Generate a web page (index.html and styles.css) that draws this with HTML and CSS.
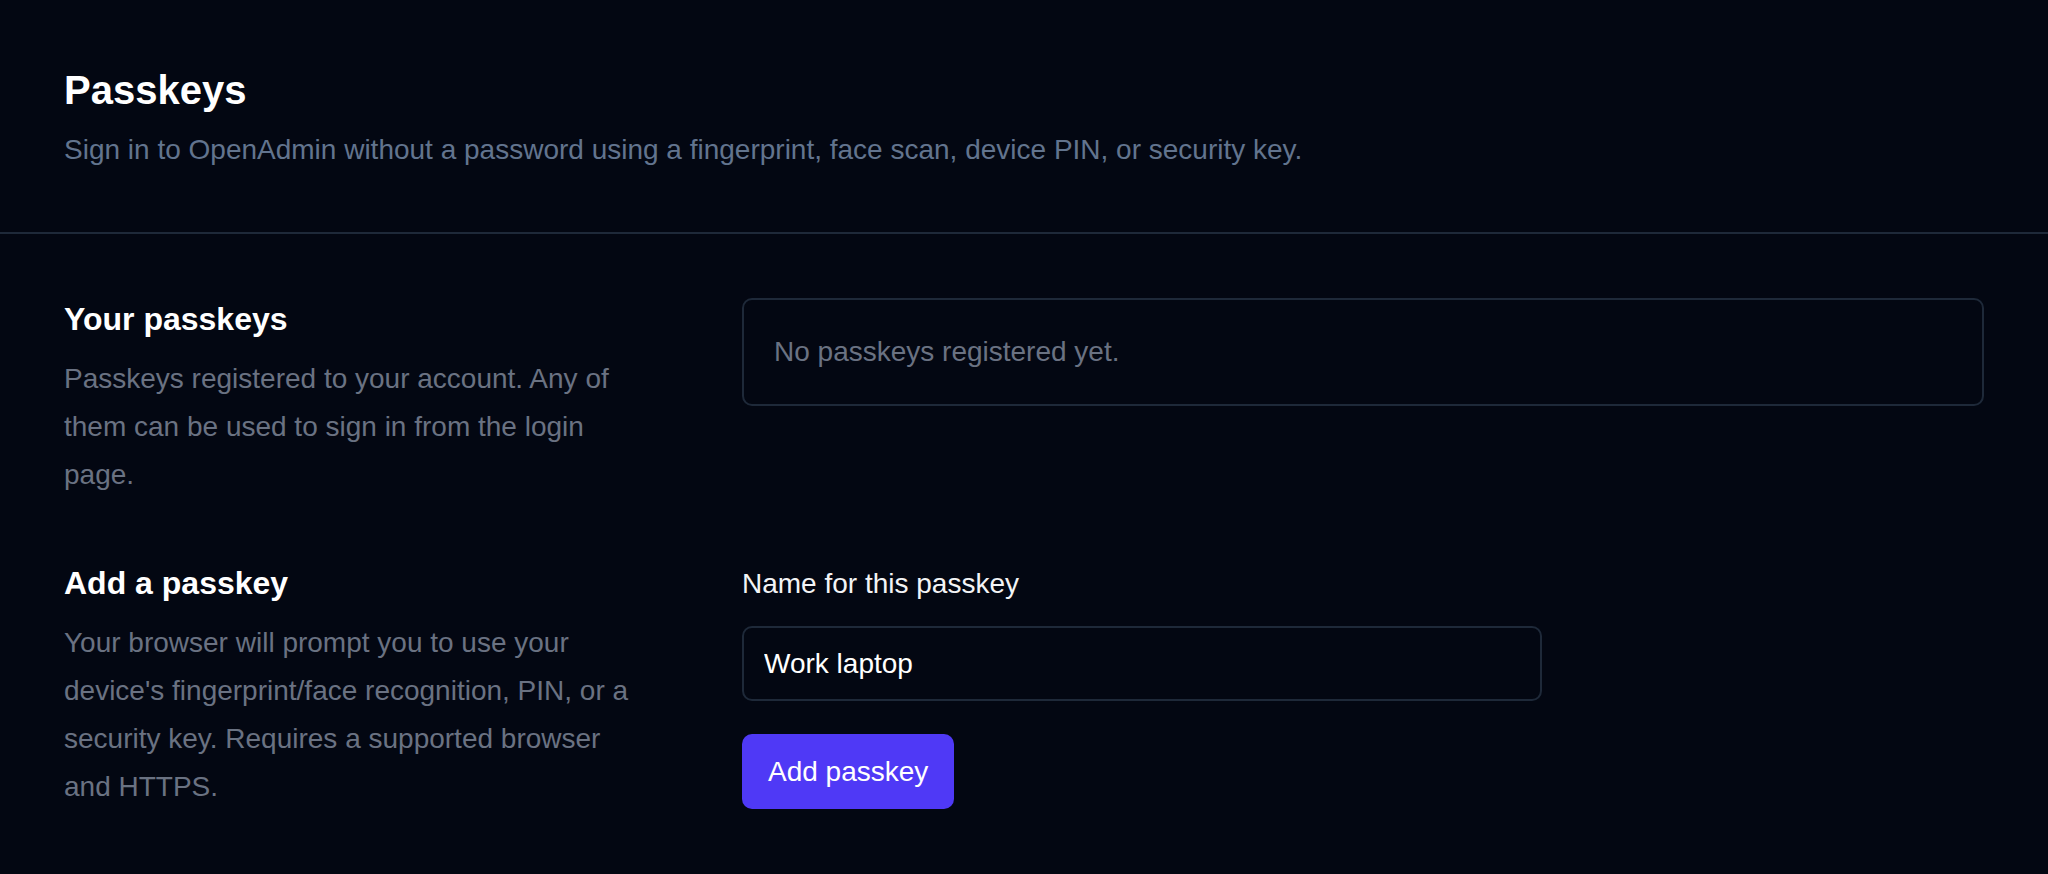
FILE: index.html
```html
<!DOCTYPE html>
<html lang="en">
<head>
<meta charset="utf-8">
<title>Passkeys</title>
<link rel="stylesheet" href="styles.css">
</head>
<body>
  <header class="page-header">
    <h1 class="page-title">Passkeys</h1>
    <p class="page-subtitle">Sign in to OpenAdmin without a password using a fingerprint, face scan, device PIN, or security key.</p>
  </header>
  <main class="settings">
    <section class="settings-row">
      <div class="row-info">
        <h2 class="row-title">Your passkeys</h2>
        <p class="row-desc">Passkeys registered to your account. Any of them can be used to sign in from the login page.</p>
      </div>
      <div class="row-body">
        <div class="empty-box">No passkeys registered yet.</div>
      </div>
    </section>
    <section class="settings-row">
      <div class="row-info">
        <h2 class="row-title">Add a passkey</h2>
        <p class="row-desc">Your browser will prompt you to use your device's fingerprint/face recognition, PIN, or a security key. Requires a supported browser and HTTPS.</p>
      </div>
      <form class="row-body add-form">
        <label class="field-label" for="pk-name">Name for this passkey</label>
        <input class="field-input" id="pk-name" type="text" value="Work laptop">
        <button class="btn-primary" type="button">Add passkey</button>
      </form>
    </section>
  </main>
</body>
</html>
```
FILE: styles.css
```css
* { box-sizing: border-box; }
html, body {
  margin: 0;
  padding: 0;
  background: #030712;
  color: #ffffff;
  font-family: "Liberation Sans", Arial, sans-serif;
}
body { min-height: 874px; }

.page-header {
  padding: 62px 64px 62px;
  border-bottom: 2px solid #1e2939;
}
.page-title {
  margin: 0;
  font-size: 40px;
  line-height: 56px;
  font-weight: 700;
  color: #ffffff;
}
.page-subtitle {
  margin: 12px 0 0;
  font-size: 28px;
  line-height: 40px;
  color: #62748e;
}

.settings {
  padding: 64px 64px 0;
  display: flex;
  flex-direction: column;
  gap: 63px;
}
.settings-row {
  display: grid;
  grid-template-columns: 1fr 2fr;
  column-gap: 57px;
  align-items: start;
}
.row-info {
  max-width: 584px;
}
.row-title {
  margin: 0;
  font-size: 32px;
  line-height: 42px;
  font-weight: 700;
  color: #ffffff;
}
.row-desc {
  margin: 15px 0 0;
  font-size: 28px;
  line-height: 48px;
  color: #6a7282;
}

.empty-box {
  border: 2px solid #1e2939;
  border-radius: 10px;
  padding: 32px 30px;
  font-size: 28px;
  line-height: 40px;
  color: #6a7282;
}

.add-form {
  display: flex;
  flex-direction: column;
  align-items: flex-start;
  margin: 0;
}
.field-label {
  font-size: 28px;
  line-height: 44px;
  color: #f3f4f6;
}
.field-input {
  margin-top: 20px;
  width: 800px;
  padding: 16px 20px 15px;
  border: 2px solid #1e2939;
  border-radius: 10px;
  background: #030712;
  color: #ffffff;
  font-family: "Liberation Sans", Arial, sans-serif;
  font-size: 28px;
  line-height: 40px;
  outline: none;
}
.btn-primary {
  margin-top: 33px;
  padding: 17.5px 26px;
  border: none;
  border-radius: 10px;
  background: #4f39f6;
  color: #ffffff;
  font-family: "Liberation Sans", Arial, sans-serif;
  font-size: 28px;
  line-height: 40px;
  cursor: pointer;
}
```
